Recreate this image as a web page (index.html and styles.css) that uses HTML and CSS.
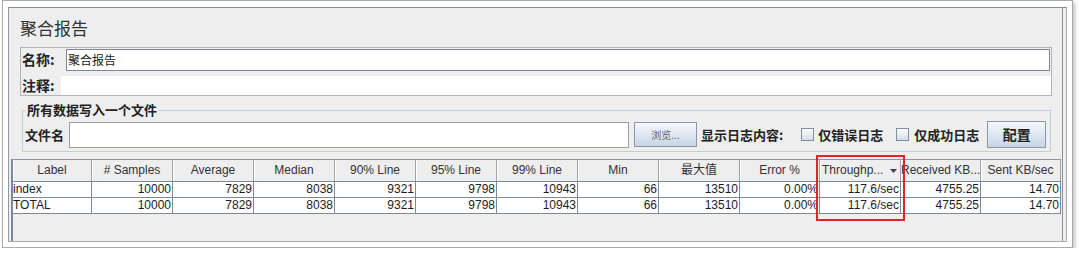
FILE: index.html
```html
<!DOCTYPE html>
<html>
<head>
    <meta charset="UTF-8">
    <title>聚合报告</title>
    <link rel="stylesheet" href="styles.css">
</head>
<body>
    <div class="frame">
        <div class="panel">
            <div class="title">聚合报告</div>

            <div class="namebox">
                <div class="nameRow">
                    <span class="lbl nameLbl">名称:</span>
                    <div class="nameField">聚合报告</div>
                </div>
                <div class="noteRow">
                    <span class="lbl noteLbl">注释:</span>
                    <div class="noteField"></div>
                </div>
            </div>

            <fieldset class="filebox">
                <legend>所有数据写入一个文件</legend>
                <div class="fileRow">
                    <span class="lbl">文件名</span>
                    <div class="fileInput"></div>
                    <div class="browseBtn">浏览...</div>
                    <span class="lbl logLbl">显示日志内容:</span>
                    <span class="check"></span>
                    <span class="lbl checkLbl">仅错误日志</span>
                    <span class="check check2"></span>
                    <span class="lbl checkLbl2">仅成功日志</span>
                    <div class="cfgBtn">配置</div>
                </div>
            </fieldset>

            <div class="gridWrap">
                <div class="gridRow headRow">
                    <div class="hc">Label</div>
                    <div class="hc"># Samples</div>
                    <div class="hc">Average</div>
                    <div class="hc">Median</div>
                    <div class="hc">90% Line</div>
                    <div class="hc">95% Line</div>
                    <div class="hc">99% Line</div>
                    <div class="hc">Min</div>
                    <div class="hc">最大值</div>
                    <div class="hc">Error %</div>
                    <div class="hc sorted">
                        <span>Throughp...</span>
                        <svg class="arrow" width="7" height="4" viewBox="0 0 7 4"><polygon points="0,0 7,0 3.5,4" fill="#2f4256"/></svg>
                    </div>
                    <div class="hc">Received KB...</div>
                    <div class="hc">Sent KB/sec</div>
                </div>
                <div class="gridRow bodyRow">
                    <div class="bc txt">index</div>
                    <div class="bc">10000</div>
                    <div class="bc">7829</div>
                    <div class="bc">8038</div>
                    <div class="bc">9321</div>
                    <div class="bc">9798</div>
                    <div class="bc">10943</div>
                    <div class="bc">66</div>
                    <div class="bc">13510</div>
                    <div class="bc">0.00%</div>
                    <div class="bc">117.6/sec</div>
                    <div class="bc">4755.25</div>
                    <div class="bc">14.70</div>
                </div>
                <div class="gridRow bodyRow">
                    <div class="bc txt">TOTAL</div>
                    <div class="bc">10000</div>
                    <div class="bc">7829</div>
                    <div class="bc">8038</div>
                    <div class="bc">9321</div>
                    <div class="bc">9798</div>
                    <div class="bc">10943</div>
                    <div class="bc">66</div>
                    <div class="bc">13510</div>
                    <div class="bc">0.00%</div>
                    <div class="bc">117.6/sec</div>
                    <div class="bc">4755.25</div>
                    <div class="bc">14.70</div>
                </div>
                <div class="mark"></div>
            </div>
        </div>
    </div>
</body>
</html>
```

FILE: styles.css
```css
/* page frame */
body {
    margin: 0;
    background-color: #fff;
    font-family: "Liberation Sans", Arial, "Noto Sans CJK SC", sans-serif;
    font-size: 12px;
    color: #222;
}

.frame {
    margin-left: 2px;
    width: 1059px;
    padding: 6px 5px 5px 5px;
    border: 1px solid #aaa;
    background-color: #fff;
    box-shadow: 2px 2px 4px rgba(0, 0, 0, 0.25);
}

.panel {
    height: 233px;
    background-color: #eee;
    border-top: 1px solid #7f8c99;
    border-left: 1px solid #8f9aa5;
    border-right: 1px solid #aaa;
    border-bottom: 1px solid #aaa;
    box-shadow: inset -3px 0 0 #eee, inset -4px 0 0 #8a949c;
}

.title {
    padding: 9px 0 8px 11px;
    font-family: "Noto Sans CJK SC", sans-serif;
    font-size: 17px;
    line-height: 22px;
    color: #333;
}

.lbl {
    font-family: "Noto Sans CJK SC", sans-serif;
    font-weight: bold;
    font-size: 13px;
    color: #222;
    white-space: nowrap;
}

/* name + comment */
.namebox {
    margin-left: 11px;
    width: 1030px;
    border: 1px solid #b4b4b4;
}

.nameRow {
    display: flex;
    height: 23px;
}

.nameLbl {
    width: 44px;
    padding-left: 1px;
    font-size: 14px;
    line-height: 23px;
}

.nameField {
    margin-top: 1px;
    width: 981px;
    height: 20px;
    padding-left: 1px;
    border: 1px solid #7d8892;
    background-color: #fff;
    font-family: "Noto Sans CJK SC", sans-serif;
    font-size: 12px;
    line-height: 20px;
    color: #222;
}

.noteRow {
    display: flex;
    height: 19px;
    margin-top: 5px;
}

.noteLbl {
    width: 39px;
    padding-left: 1px;
    font-size: 14px;
    line-height: 19px;
}

.noteField {
    flex: 1;
    background-color: #fff;
}

/* file settings */
.filebox {
    box-sizing: border-box;
    width: 1029px;
    margin: 6px 0 0 13px;
    padding: 3px 3px 3px 2px;
    border: 1px solid #b8cfe5;
}

.filebox legend {
    padding: 0 2px;
    font-family: "Noto Sans CJK SC", sans-serif;
    font-weight: bold;
    font-size: 13px;
    line-height: 16px;
    color: #222;
}

.fileRow {
    display: flex;
    align-items: center;
    height: 27px;
}

.fileInput {
    margin-left: 5px;
    width: 558px;
    height: 24px;
    border: 1px solid #9aa0a6;
    background-color: #fff;
}

.browseBtn {
    margin-left: 5px;
    width: 61px;
    height: 23px;
    border: 1px solid #8899aa;
    background: linear-gradient(#f6f8fb, #c6d5e5);
    font-family: "Noto Sans CJK SC", sans-serif;
    font-size: 10px;
    line-height: 23px;
    text-align: center;
    color: #666;
}

.logLbl {
    margin-left: 4px;
}

.check {
    margin-left: 18px;
    width: 11px;
    height: 11px;
    border: 1px solid #7f8fa0;
    background: linear-gradient(#fdfdfe, #d4dde8);
}

.check2 {
    margin-left: 13px;
}

.checkLbl {
    margin-left: 4px;
}

.checkLbl2 {
    margin-left: 5px;
}

.cfgBtn {
    margin-left: 8px;
    width: 57px;
    height: 25px;
    border: 1px solid #8899aa;
    background: linear-gradient(#f6f8fb, #c6d5e5);
    font-family: "Noto Sans CJK SC", sans-serif;
    font-weight: bold;
    font-size: 14px;
    line-height: 25px;
    text-align: center;
    color: #222;
}

/* results grid */
.gridWrap {
    position: relative;
    margin: 7px 0 0 2px;
    width: 1048px;
    height: 82px;
    border-left: 2px solid #7d8997;
    background-color: #eee;
}

.gridRow {
    display: grid;
    grid-template-columns: 79px repeat(8, 81px) 80px 81px 80px 80px;
}

.headRow {
    border-top: 1px solid #8d969e;
    border-bottom: 1px solid #7d8997;
}

.hc {
    height: 21px;
    line-height: 21px;
    text-align: center;
    border-right: 1px solid #9ba3ab;
    box-shadow: inset 1px 0 0 #fff;
    color: #333;
    white-space: nowrap;
    overflow: hidden;
}

.sorted {
    display: flex;
    justify-content: space-between;
    align-items: center;
    padding-left: 2px;
    padding-right: 3px;
}

.bodyRow {
    border-bottom: 1px solid #7d8997;
}

.bc {
    height: 15px;
    line-height: 15px;
    padding-right: 1px;
    text-align: right;
    border-right: 1px solid #7d8997;
    background-color: #fff;
    color: #1c1c28;
    white-space: nowrap;
}

.txt {
    text-align: left;
    padding-left: 0;
}

.mark {
    position: absolute;
    left: 803px;
    top: -4px;
    width: 85px;
    height: 62px;
    border: 2px solid #e3222b;
}
```
